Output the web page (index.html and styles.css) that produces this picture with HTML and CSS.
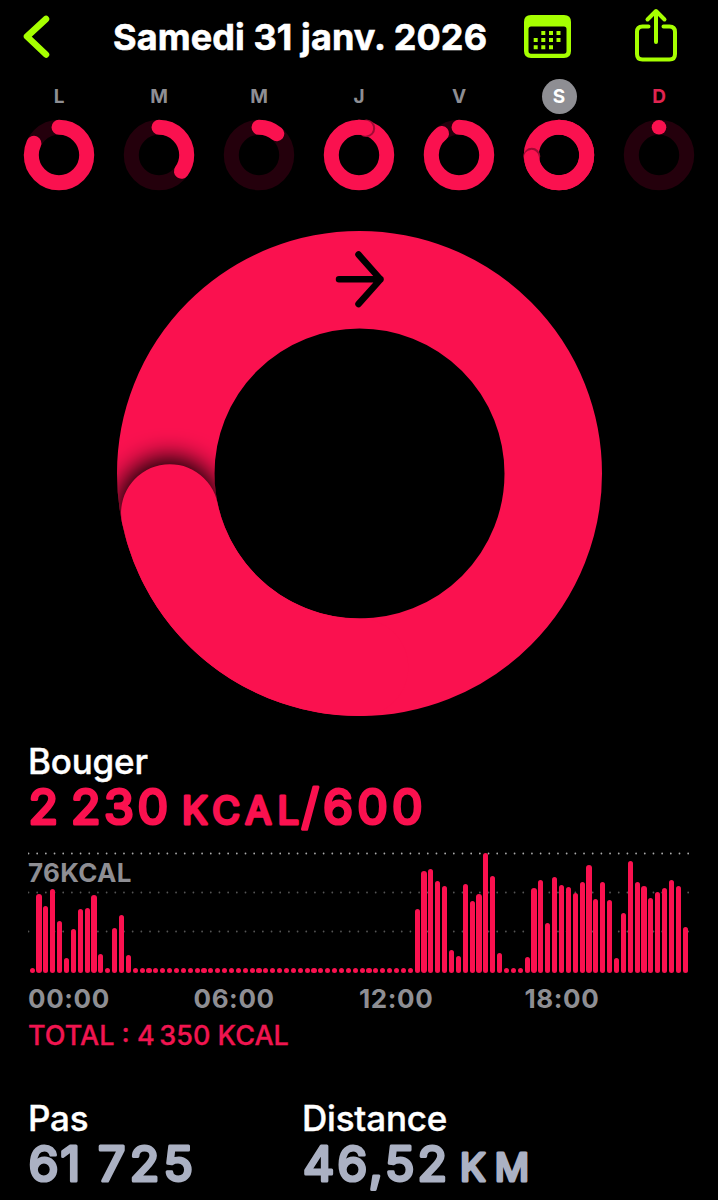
FILE: index.html
```html
<!DOCTYPE html>
<html lang="fr">
  <head>
    <meta charset="UTF-8" />
    <meta name="viewport" content="width=device-width, initial-scale=1.0" />
    <title>Activité</title>
    <link rel="stylesheet" href="styles.css">
  </head>

  <body>
    <header class="header">
      <svg class="icon-back" width="34" height="50" viewBox="0 0 34 50">
        <path d="M26 7 L7 24.5 L26 42.5" />
      </svg>
      <h1 class="title">Samedi 31 janv. 2026</h1>
      <svg class="icon-calendar" width="48" height="44" viewBox="0 0 48 44">
        <path fill-rule="evenodd" d="M7 0 H40 Q47 0 47 7 V36 Q47 43 40 43 H7 Q0 43 0 36 V7 Q0 0 7 0 Z M7 11.5 Q4.500 11.500 4.500 14 V36 Q4.500 38.700 7 38.700 H40 Q42.500 38.700 42.500 36 V14 Q42.500 11.500 40 11.500 Z" />
        <path class="dots" d="M19.300 16v4M27 16v4M34.500 16v4M11.700 23v4M19.300 23v4M27 23v4M34.500 23v4M11.700 30.300v4M19.300 30.300v4M27 30.300v4" />
      </svg>
      <svg class="icon-share" width="44" height="56" viewBox="0 0 44 56">
        <path d="M14.500 18.500 H8.500 Q3 18.500 3 24 V46 Q3 51.500 8.500 51.500 H35.500 Q41 51.500 41 46 V24 Q41 18.500 35.500 18.500 H29.500" />
        <path d="M22 34 V4 M13.500 11.500 L22 3 L30.500 11.500" />
      </svg>
    </header>

    <nav class="week">
      <div class="day">
        <span class="day-label">L</span>
        <svg class="mini" viewBox="0 0 72 72">
          <circle class="track" cx="36" cy="36" r="27.7" />
          <circle class="arc" cx="36" cy="36" r="27.7" pathLength="360" stroke-dasharray="295 65" />
        </svg>
      </div>
      <div class="day">
        <span class="day-label">M</span>
        <svg class="mini" viewBox="0 0 72 72">
          <circle class="track" cx="36" cy="36" r="27.7" />
          <circle class="arc" cx="36" cy="36" r="27.7" pathLength="360" stroke-dasharray="126 234" />
        </svg>
      </div>
      <div class="day">
        <span class="day-label">M</span>
        <svg class="mini" viewBox="0 0 72 72">
          <circle class="track" cx="36" cy="36" r="27.7" />
          <circle class="arc" cx="36" cy="36" r="27.7" pathLength="360" stroke-dasharray="40 320" />
        </svg>
      </div>
      <div class="day">
        <span class="day-label">J</span>
        <svg class="mini" viewBox="0 0 72 72">
          <circle class="full" cx="36" cy="36" r="27.7" />
          <circle class="edge" cx="43.4" cy="9.3" r="7.3" />
          <circle class="arc" cx="36" cy="36" r="27.7" pathLength="360" stroke-dasharray="14 346" />
        </svg>
      </div>
      <div class="day">
        <span class="day-label">V</span>
        <svg class="mini" viewBox="0 0 72 72">
          <circle class="track" cx="36" cy="36" r="27.7" />
          <circle class="arc" cx="36" cy="36" r="27.7" pathLength="360" stroke-dasharray="321 39" />
        </svg>
      </div>
      <div class="day">
        <span class="day-label selected">S</span>
        <svg class="mini" viewBox="0 0 72 72">
          <circle class="full" cx="36" cy="36" r="27.7" />
          <circle class="edge" cx="8.8" cy="37.2" r="7" />
          <circle class="arc" cx="36" cy="36" r="27.7" pathLength="360" stroke-dasharray="265 95" />
        </svg>
      </div>
      <div class="day">
        <span class="day-label today">D</span>
        <svg class="mini" viewBox="0 0 72 72">
          <circle class="track" cx="36" cy="36" r="27.7" />
          <circle class="dot" cx="36" cy="8.300" r="7.300" />
        </svg>
      </div>
    </nav>

    <svg class="ring" width="487" height="487" viewBox="-0.5 -0.5 487 487">
      <defs>
        <filter id="soft" x="-50%" y="-50%" width="200%" height="200%">
          <feGaussianBlur stdDeviation="13" />
        </filter>
        <clipPath id="band">
          <path clip-rule="evenodd" d="M0.500 243 a242.500 242.500 0 1 1 485 0 a242.500 242.500 0 1 1 -485 0 Z M98 243 a145 145 0 1 1 290 0 a145 145 0 1 1 -290 0 Z" />
        </clipPath>
      </defs>
      <circle class="ring-band" cx="243" cy="243" r="193.750" />
      <g clip-path="url(#band)">
        <circle class="ring-shadow" cx="52.500" cy="279" r="52" filter="url(#soft)" />
      </g>
      <path class="ring-head" d="M243 436.750 A193.750 193.750 0 0 1 53.300 282.500" />
      <path class="ring-arrow" d="M222.500 48.800 H264 M242 24 L264 48.800 L242 73.500" />
    </svg>

    <section class="move">
      <h2 class="label">Bouger</h2>
      <svg class="value move-value" width="400" height="54">
        <text y="42"><tspan x="0.500">2 </tspan><tspan x="43" textLength="97">230</tspan><tspan class="unit" x="154" textLength="117">KCAL</tspan><tspan x="273.500" textLength="121">/600</tspan></text>
      </svg>

      <div class="chart">
        <svg class="grid" width="664" height="82">
          <path class="grid-top" d="M0.500 1.500 H662" />
          <path d="M0.500 40.500 H662 M0.500 79.500 H662" />
        </svg>
        <span class="chart-max">76KCAL</span>
        <div class="bars" id="bars"></div>
      </div>
      <div class="hours">
        <span>00:00</span>
        <span>06:00</span>
        <span>12:00</span>
        <span>18:00</span>
      </div>
      <p class="total">TOTAL : 4&#8239;350 KCAL</p>
    </section>

    <section class="stats">
      <div class="stat">
        <h2 class="label">Pas</h2>
        <svg class="value" width="240" height="54">
          <text y="42"><tspan x="0.500" dx="0 2">61 </tspan><tspan x="70" textLength="95">725</tspan></text>
        </svg>
      </div>
      <div class="stat">
        <h2 class="label">Distance</h2>
        <svg class="value" width="260" height="54">
          <text y="42"><tspan x="1" textLength="144">46,52</tspan><tspan class="unit" x="158" textLength="69">KM</tspan></text>
        </svg>
      </div>
    </section>

    <script src="chart.js"></script>
  </body>
</html>
```

FILE: styles.css
```css
* {
  box-sizing: border-box;
}

body {
  margin: 0;
  width: 718px;
  height: 1200px;
  overflow: hidden;
  background-color: #000;
  color: #fff;
  font-family: Inter, "Liberation Sans", sans-serif;
}

h1,
h2,
p {
  margin: 0;
}

svg {
  display: block;
}

.header {
  display: flex;
  height: 76px;
  padding-left: 20px;
}

.icon-back {
  margin-top: 12px;
  fill: none;
  stroke: #a6ff00;
  stroke-width: 6.5;
  stroke-linecap: round;
  stroke-linejoin: round;
}

.title {
  width: 380px;
  height: 50px;
  margin: 12px 0 0 59px;
  line-height: 50px;
  font-size: 36px;
  font-weight: 700;
  letter-spacing: 0.1px;
  white-space: nowrap;
  -webkit-text-stroke: 0.6px #fff;
}

.icon-calendar {
  margin: 15px 0 0 31px;
  fill: #a6ff00;
}

.icon-calendar .dots {
  stroke: #a6ff00;
  stroke-width: 4;
}

.icon-share {
  margin: 8px 0 0 62px;
  fill: none;
  stroke: #a6ff00;
  stroke-width: 4;
  stroke-linecap: round;
  stroke-linejoin: round;
}

.week {
  display: grid;
  grid-template-columns: repeat(7, 100px);
  margin-left: 9px;
}

.day {
  display: flex;
  flex-direction: column;
  align-items: center;
  margin-top: 3px;
}

.day-label {
  width: 35px;
  height: 35px;
  border-radius: 50%;
  text-align: center;
  line-height: 35px;
  font-size: 19px;
  font-weight: 700;
  color: #8e8e93;
}

.selected {
  background-color: #8e8e93;
  color: #fff;
}

.today {
  color: #e02450;
}

.mini {
  width: 72px;
  height: 72px;
  margin-top: 5px;
  fill: none;
  stroke-width: 15;
}

.track {
  stroke: #24000c;
}

.full {
  stroke: #fa114f;
}

.arc {
  stroke: #fa114f;
  stroke-linecap: round;
  transform: rotate(-90deg);
  transform-origin: 36px 36px;
}

.edge {
  stroke: #a00a34;
  stroke-width: 3;
}

.dot {
  fill: #fa114f;
}

.ring {
  margin: 39px 0 0 116px;
}

.ring-band,
.ring-head {
  fill: none;
  stroke: #fa114f;
  stroke-width: 97.5;
  stroke-linecap: round;
}

.ring-shadow {
  fill: #000;
}

.ring-arrow {
  fill: none;
  stroke: #000;
  stroke-width: 6.5;
  stroke-linecap: round;
  stroke-linejoin: round;
}

.move {
  margin: 23px 0 0 28px;
}

.label {
  height: 42px;
  line-height: 42px;
  font-size: 35px;
  font-weight: 500;
  letter-spacing: -0.2px;
  -webkit-text-stroke: 0.4px #fff;
}

/* rounded look comes from the round stroke joins */
.value {
  overflow: visible;
}

.value text {
  fill: #abb1c3;
  stroke: #abb1c3;
  stroke-width: 3.2;
  stroke-linejoin: round;
  font-size: 48.5px;
  font-weight: 400;
}

.value .unit {
  font-size: 38px;
}

.move-value text {
  fill: #fa114f;
  stroke: #fa114f;
}

.chart {
  display: grid;
  width: 664px;
  height: 122px;
  margin-top: 16px;
}

.grid,
.chart-max,
.bars {
  grid-area: 1 / 1;
}

.grid {
  stroke: #555;
  stroke-width: 1.8;
  stroke-linecap: round;
  stroke-dasharray: 0 8.68;
}

.grid-top {
  stroke: #aaa;
}

.chart-max {
  margin-top: 6px;
  line-height: 30px;
  font-size: 26px;
  font-weight: 700;
  letter-spacing: 0.3px;
  color: #8e8e93;
}

.bars {
  display: flex;
  align-items: flex-end;
  justify-content: space-between;
  width: 659px;
  height: 121px;
  margin-left: 1.5px;
}

.bar {
  width: 5.2px;
  border-radius: 3px;
  background-color: #fa114f;
}

.hours {
  display: grid;
  grid-template-columns: repeat(4, 165.5px);
  margin-top: 9px;
  line-height: 32px;
  font-size: 26px;
  font-weight: 700;
  letter-spacing: 0.6px;
  color: #8e8e93;
}

.total {
  margin-top: 4px;
  line-height: 34px;
  font-size: 27px;
  font-weight: 500;
  color: #f01550;
  -webkit-text-stroke: 0.3px #f01550;
}

.stats {
  display: grid;
  grid-template-columns: 274px 1fr;
  margin: 44px 0 0 28px;
}
```

FILE: chart.js
```javascript
// one bar per quarter of an hour, heights in px
const idle = 5.2;
const heights = [
  idle, 79.3, 66.7, 84, 52, 15, 44.3, 64.3, 65.3, 78.3, 19, idle, 45, 57.7, 18.3,
  ...Array(41).fill(idle),
  63.7, 102.3, 104, 92, 87.3, 23.3, 17, 89, 71.7, 79.3, 119.7, 96.7, 20.3, idle, idle, idle,
  16.3, 85.3, 93, 50.3, 95.7, 87.7, 86.3, 79.7, 91.3, 108.3, 74.3, 91.3, 73.3, 15, 59.7, 112,
  90.7, 86.7, 75, 81, 85.3, 93, 87, 46.3,
];

const bars = document.getElementById("bars");
heights.forEach((height) => {
  const bar = document.createElement("span");
  bar.className = "bar";
  bar.style.height = height + "px";
  bars.appendChild(bar);
});
```
